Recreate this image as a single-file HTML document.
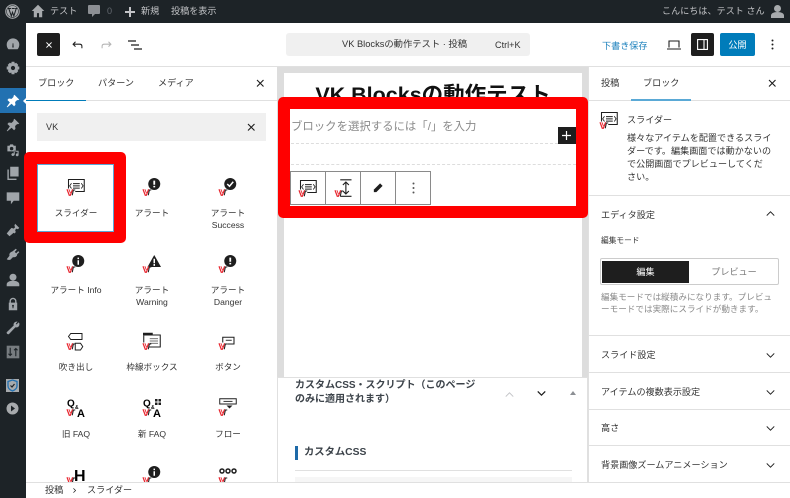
<!DOCTYPE html>
<html lang="ja"><head><meta charset="utf-8"><title>VK Blocks</title>
<style>
html,body{margin:0;padding:0;width:790px;height:498px;overflow:hidden;background:#fff}
body{position:relative;font-family:"Liberation Sans","Noto Sans CJK JP",sans-serif;color:#1e1e1e;font-size:9px;filter:blur(.3px)}
.a{position:absolute}
.t{position:absolute;white-space:nowrap;line-height:12px;font-size:9.100px}
.w{color:#c3c4c7}
.l{position:absolute;background:#e0e0e0}
.c{position:absolute;width:76px;text-align:center;line-height:12px;font-size:8.600px;color:#333}
svg{position:absolute;overflow:visible}
.ic{width:18px;height:18px}
.sb{width:14px;height:14px;fill:#a0a5aa;stroke:none}
.x{stroke:#1e1e1e;stroke-width:1.200;fill:none}
.chev{fill:none;stroke:#1e1e1e;stroke-width:1.200;width:9px;height:5px}
</style></head><body>
<svg width="0" height="0" style="position:absolute">
<defs>
<symbol id="vk" viewBox="0 0 24 24" overflow="visible"><path d="M0 15l3 8h1.500l3-8" fill="none" stroke="#e8262f" stroke-width="1.600"/><path d="M2.500 15l2 5" stroke="#e8262f" stroke-width="1.200"/><path d="M7 23l1.500-7H11" fill="none" stroke="#1e1e1e" stroke-width="1.400"/></symbol>
<symbol id="slider" viewBox="0 0 24 24" overflow="visible"><path d="M2 14V2h21v16H11" fill="none" stroke="#1e1e1e" stroke-width="1.400"/><path d="M8 10.500h9M8 7.500h9M8 13.500h9" stroke="#1e1e1e" stroke-width="1.200"/><path d="M6 7l-2.500 3.500L6 14M19 7l2.500 3.500L19 14" fill="none" stroke="#1e1e1e" stroke-width="1.100"/><use href="#vk"/></symbol>
<symbol id="alert" viewBox="0 0 24 24" overflow="visible"><circle cx="15" cy="8" r="8" fill="#1e1e1e"/><path d="M15 3.500v5.500M15 10.500v2" stroke="#fff" stroke-width="2.400"/><use href="#vk"/></symbol>
<symbol id="succ" viewBox="0 0 24 24" overflow="visible"><circle cx="15" cy="8" r="8" fill="#1e1e1e"/><path d="M11 8l3 3 5-6" fill="none" stroke="#fff" stroke-width="2"/><use href="#vk"/></symbol>
<symbol id="info" viewBox="0 0 24 24" overflow="visible"><circle cx="15" cy="8" r="8" fill="#1e1e1e"/><path d="M15 3.500v2M15 7v6" stroke="#fff" stroke-width="2"/><use href="#vk"/></symbol>
<symbol id="warn" viewBox="0 0 24 24" overflow="visible"><path d="M15 0l9 16H6z" fill="#1e1e1e"/><path d="M15 5v6M15 12v2.500" stroke="#fff" stroke-width="2"/><use href="#vk"/></symbol>
<symbol id="bubble" viewBox="0 0 24 24" overflow="visible"><path d="M5 2h15v8H5L2 6z" fill="none" stroke="#1e1e1e" stroke-width="1.300"/><path d="M11 15h7l3 4.500-3 4.500h-7z" fill="none" stroke="#1e1e1e" stroke-width="1.300"/><use href="#vk"/></symbol>
<symbol id="box" viewBox="0 0 24 24" overflow="visible"><path d="M0 1h13v3h-13z" fill="#1e1e1e"/><path d="M1 4h22v16H8" fill="none" stroke="#1e1e1e" stroke-width="1.400"/><path d="M1 4v10" stroke="#1e1e1e" stroke-width="1.400"/><path d="M9 9h11M9 12h11M9 15h11" stroke="#444" stroke-width="1.100"/><use href="#vk"/></symbol>
<symbol id="btn" viewBox="0 0 24 24" overflow="visible"><path d="M5 14V7h15v9H11" fill="none" stroke="#1e1e1e" stroke-width="1.400"/><path d="M9 11h8" stroke="#1e1e1e" stroke-width="1.200"/><use href="#vk"/></symbol>
<symbol id="flow" viewBox="0 0 24 24" overflow="visible"><path d="M1 1h22v7H1z" fill="none" stroke="#1e1e1e" stroke-width="1.300"/><path d="M6 4.500h12" stroke="#1e1e1e" stroke-width="1.200"/><path d="M10 10h8l-4 4z" fill="#1e1e1e"/><use href="#vk"/></symbol>
<symbol id="vh" viewBox="0 0 24 24" overflow="visible"><use href="#vk"/></symbol>
</defs></svg>

<!-- sidebar + admin bar -->
<div class="a" style="left:0;top:0;width:790px;height:23px;background:#1d2327"></div>
<div class="a" style="left:0;top:0;width:26px;height:498px;background:#1d2327"></div>
<div class="a" style="left:0;top:88px;width:26px;height:25px;background:#2271b1"></div>
<div class="a" style="left:23px;top:97px;width:0;height:0;border:4px solid transparent;border-left:0;border-right:4px solid #fff"></div>

<svg style="left:5px;top:4px" width="15" height="15" viewBox="0 0 20 20"><circle cx="10" cy="10" r="9" fill="none" stroke="#a7aaad" stroke-width="1.500"/><circle cx="10" cy="10" r="7.500" fill="#a7aaad"/><path d="M5 6l3.500 10L10 11l1.800 5L15 6M4 6h4M9 6h4M13.500 6H16" fill="none" stroke="#1d2327" stroke-width="1.400"/></svg>
<svg style="left:31px;top:4px" width="14" height="14" viewBox="0 0 20 20" fill="#a7aaad"><path d="M10 1L1 10h3v9h4.500v-6h3v6H16v-9h3z"/></svg>
<div class="t w" style="left:50px;top:5px">テスト</div>
<svg style="left:88px;top:5px" width="12" height="13" viewBox="0 0 12 13" fill="#8c8f94"><path d="M1 0h10a1 1 0 011 1v7a1 1 0 01-1 1H7l-3 3V9H1a1 1 0 01-1-1V1a1 1 0 011-1z"/></svg>
<div class="t" style="left:107px;top:5px;color:#646970">0</div>
<svg style="left:125px;top:7px" width="10" height="10" viewBox="0 0 10 10"><path d="M5 0v10M0 5h10" stroke="#c3c4c7" stroke-width="2"/></svg>
<div class="t w" style="left:141px;top:5px">新規</div>
<div class="t w" style="left:171px;top:5px">投稿を表示</div>
<div class="t w" style="left:662px;top:5px;font-size:9px;letter-spacing:.1px">こんにちは、テスト さん</div>
<svg style="left:771px;top:5px" width="13" height="13" viewBox="0 0 13 13" fill="#a7aaad"><circle cx="6.500" cy="3.500" r="3.500"/><path d="M0 13v-2.500C0 8.500 2.500 7 6.500 7s6.500 1.500 6.500 3.500V13z"/></svg>

<!-- sidebar icons -->
<svg class="sb" style="left:6px;top:37px" viewBox="0 0 20 20"><path d="M10 2a9 9 0 00-9 9c0 2.500 1 5 2.500 6.500h13C18 16 19 13.500 19 11a9 9 0 00-9-9zm1 13H9l.5-6h1z" fill-rule="evenodd"/></svg>
<svg class="sb" style="left:6px;top:61px" viewBox="0 0 20 20"><path d="M8 1h4l.5 2.500 2-1 3 3-1 2L19 8v4l-2.500.5 1 2-3 3-2-1L12 19H8l-.5-2.500-2 1-3-3 1-2L1 12V8l2.500-.5-1-2 3-3 2 1zm2 6a3 3 0 100 6 3 3 0 000-6z" fill-rule="evenodd"/></svg>
<svg class="sb" style="left:6px;top:94px;fill:#fff" viewBox="0 0 20 20"><path d="M12 1l7 7-2 1-1-.5-3 3 .5 4-2 2-3.500-3.500L2 19l-1-.5 4.500-6.500L2 8.500l2-2 4 .5 3-3-.5-1z"/></svg>
<svg class="sb" style="left:6px;top:118px" viewBox="0 0 20 20"><path d="M12 1l7 7-2 1-1-.5-3 3 .5 4-2 2-3.500-3.500L2 19l-1-.5 4.500-6.500L2 8.500l2-2 4 .5 3-3-.5-1z"/></svg>
<svg class="sb" style="left:6px;top:143px" viewBox="0 0 20 20"><path d="M2 4h3l1-2h4l1 2h3v8H2zm6 1.500a2.500 2.500 0 100 5 2.500 2.500 0 000-5zM11 18a2 2 0 110-3V11h7v6a2 2 0 11-1.500-2v-2.500h-4V16a2 2 0 01-1.500 2z" fill-rule="evenodd"/></svg>
<svg class="sb" style="left:6px;top:166px" viewBox="0 0 20 20"><path d="M6 1h12v14H6zM2 5h2v13h11v2H2z"/></svg>
<svg class="sb" style="left:6px;top:191px" viewBox="0 0 20 20"><path d="M1 2h18v12h-8l-4 5v-5H1z"/></svg>
<svg class="sb" style="left:6px;top:223px" viewBox="0 0 20 20"><path d="M13 1l6 6-2 2-2-1-2 2 1 3-2 2-6-6 2-2 3 1 2-2-1-2zM6 9l5 5-6 5-4-4z"/></svg>
<svg class="sb" style="left:6px;top:248px" viewBox="0 0 20 20"><path d="M14 1l1.500 1.500-3 3 2 2 3-3L19 6l-3 3c0 3-3 5-6 4l-4 4H2v-1l-1 0 4-5c-1-3 1-5 4-6z"/></svg>
<svg class="sb" style="left:6px;top:273px" viewBox="0 0 20 20"><circle cx="10" cy="6" r="5"/><path d="M1 19v-3c0-3 4-5 9-5s9 2 9 5v3z"/></svg>
<svg class="sb" style="left:6px;top:297px" viewBox="0 0 20 20"><path d="M5 8V6a5 5 0 0110 0v2h1v11H4V8zm2 0h6V6a3 3 0 00-6 0zm3 3a1.500 1.500 0 00-.7 2.800V16h1.400v-2.200A1.500 1.500 0 0010 11z" fill-rule="evenodd"/></svg>
<svg class="sb" style="left:6px;top:321px" viewBox="0 0 20 20"><path d="M18 2l-3 3-1-1 2.500-3C13 0 10 3 11 6.500L1 16c-.5 1.500 1 3 3 3l9.500-10C17 10 20 7 19 3z"/></svg>
<svg class="sb" style="left:6px;top:345px;fill:#777c80" viewBox="0 0 20 20"><path d="M1 1h18v18H1z"/><path d="M6 4v11M3.500 12.500L6 15l2.500-2.500M14 16V5M11.500 7.500L14 5l2.500 2.500" fill="none" stroke="#1d2327" stroke-width="1.600"/></svg>
<div class="a" style="left:6px;top:379px;width:13px;height:13px;background:#a7aaad"></div>
<svg style="left:6px;top:379px" width="13" height="13" viewBox="0 0 13 13"><path d="M6.500 1l4.500 1.500V7c0 2.500-2 4-4.500 5C4 11 2 9.500 2 7V2.500z" fill="none" stroke="#2271b1" stroke-width="1.300"/><path d="M4.500 6.500l1.500 1.500 2.500-3" fill="none" stroke="#1d2327" stroke-width="1.200"/></svg>
<svg style="left:6px;top:402px" width="13" height="13" viewBox="0 0 13 13"><circle cx="6.500" cy="6.500" r="6" fill="#a7aaad"/><path d="M5 3.500l4 3-4 3z" fill="#1d2327"/></svg>

<!-- header -->
<div class="l" style="left:26px;top:66px;width:764px;height:1px"></div>
<div class="a" style="left:37px;top:33px;width:23px;height:23px;background:#1e1e1e;border-radius:2px"></div>
<svg style="left:45.500px;top:41.500px" width="6" height="6" viewBox="0 0 7 7"><path d="M.5.500l6 6M6.500.500l-6 6" stroke="#fff" stroke-width="1.200"/></svg>
<svg style="left:72px;top:41px" width="11" height="8" viewBox="0 0 13 10"><path d="M12 9V6.500C12 5 11 4 9 4H1M4 1L1 4l3 3" fill="none" stroke="#1e1e1e" stroke-width="1.300"/></svg>
<svg style="left:101px;top:41px" width="11" height="8" viewBox="0 0 13 10"><path d="M1 9V6.500C1 5 2 4 4 4h8M9 1l3 3-3 3" fill="none" stroke="#b5b5b5" stroke-width="1.300"/></svg>
<svg style="left:128px;top:40px" width="14" height="10" viewBox="0 0 14 10"><path d="M0 1h8M3 5h8M6 9h8" stroke="#1e1e1e" stroke-width="1.200"/></svg>
<div class="a" style="left:286px;top:33px;width:244px;height:23px;background:#f0f0f0;border-radius:3px"></div>
<div class="t" style="left:342px;top:38px;font-size:9.300px;color:#333">VK Blocksの動作テスト · 投稿</div>
<div class="t" style="left:495px;top:39px;color:#333">Ctrl+K</div>
<div class="t" style="left:602px;top:40px;color:#1e82bd">下書き保存</div>
<svg style="left:667px;top:40px" width="14" height="10" viewBox="0 0 14 10"><path d="M2 7.500V1h10v6.500M0 9h14" fill="none" stroke="#1e1e1e" stroke-width="1.100"/></svg>
<div class="a" style="left:691px;top:33px;width:23px;height:23px;background:#1e1e1e;border-radius:2px"></div>
<svg style="left:697px;top:39px" width="11" height="11" viewBox="0 0 11 11"><path d="M.6.600h9.800v9.800H.6zM7 .6v9.800" fill="none" stroke="#fff" stroke-width="1.100"/></svg>
<div class="a" style="left:720px;top:33px;width:35px;height:23px;background:#007cba;border-radius:2px"></div>
<div class="t" style="left:720px;top:39px;width:35px;text-align:center;color:#fff">公開</div>
<svg style="left:771px;top:39px" width="3" height="11" viewBox="0 0 3 11" fill="#1e1e1e"><circle cx="1.500" cy="1.500" r="1"/><circle cx="1.500" cy="5.500" r="1"/><circle cx="1.500" cy="9.500" r="1"/></svg>

<!-- canvas -->
<div class="a" style="left:277px;top:67px;width:312px;height:310px;background:#ddd"></div>
<div class="a" style="left:284px;top:73px;width:298px;height:304px;background:#fff"></div>
<div class="t" style="left:284px;top:82px;width:298px;text-align:center;font-size:21.500px;line-height:26px;font-weight:bold;color:#111">VK Blocksの動作テスト</div>

<!-- meta box -->
<div class="a" style="left:277px;top:377px;width:311px;height:105px;background:#fff;border-left:1px solid #e0e0e0;border-right:1px solid #e0e0e0;box-sizing:border-box;border-top:1px solid #e0e0e0"></div>
<div class="t" style="left:295px;top:380px;font-size:10px;font-weight:bold;color:#3c434a">カスタムCSS・スクリプト（このページ</div>
<div class="t" style="left:295px;top:394px;font-size:10px;font-weight:bold;color:#3c434a">のみに適用されます）</div>
<svg class="chev" style="left:505px;top:392px" viewBox="0 0 10 6"><path d="M.5 5.500L5 1l4.500 4.500" stroke="#c3c4c7"/></svg>
<svg class="chev" style="left:537px;top:391px" viewBox="0 0 10 6"><path d="M.5.500L5 5l4.500-4.500" stroke-width="1.500"/></svg>
<div class="a" style="left:570px;top:391px;width:0;height:0;border:3px solid transparent;border-top:0;border-bottom:4px solid #8c8f94"></div>
<div class="a" style="left:295px;top:446px;width:3px;height:14px;background:#1e6aa8"></div>
<div class="t" style="left:304px;top:447px;font-size:10.300px;font-weight:bold;color:#3c434a">カスタムCSS</div>
<div class="l" style="left:295px;top:470px;width:277px;height:1px"></div>
<div class="a" style="left:295px;top:477px;width:277px;height:5px;background:#f6f6f6"></div>

<!-- inserter -->
<div class="a" style="left:26px;top:67px;width:251px;height:415px;background:#fff;overflow:hidden">
<div class="l" style="left:0;top:33px;width:251px;height:1px"></div>
<div class="a" style="left:0;top:32.500px;width:60px;height:1.500px;background:#007cba"></div>
</div>
<div class="t" style="left:38px;top:77px;color:#333">ブロック</div>
<div class="t" style="left:98px;top:77px;color:#333">パターン</div>
<div class="t" style="left:158px;top:77px;color:#333">メディア</div>
<svg class="x" style="left:257px;top:80px" width="6.500" height="6.500" viewBox="0 0 7 7"><path d="M0 0l7 7M7 0L0 7"/></svg>
<div class="a" style="left:37px;top:113px;width:229px;height:28px;background:#f0f0f0"></div>
<div class="t" style="left:46px;top:121px;color:#333">VK</div>
<svg class="x" style="left:248px;top:124px" width="6.500" height="6.500" viewBox="0 0 7 7"><path d="M0 0l7 7M7 0L0 7"/></svg>

<!-- red 1 -->
<div class="a" style="left:24px;top:152px;width:102px;height:91px;background:#f00;border-radius:5px"></div>
<div class="a" style="left:37px;top:164px;width:77px;height:68px;background:#fff;box-sizing:border-box;border:1px solid #5ba6d6"></div>

<svg class="ic" style="left:67px;top:178px"><use href="#slider" width="18" height="18"/></svg>
<div class="c" style="left:38px;top:207px">スライダー</div>
<svg class="ic" style="left:143px;top:178px"><use href="#alert" width="18" height="18"/></svg>
<div class="c" style="left:114px;top:207px">アラート</div>
<svg class="ic" style="left:219px;top:178px"><use href="#succ" width="18" height="18"/></svg>
<div class="c" style="left:190px;top:207px">アラート<br>Success</div>

<svg class="ic" style="left:67px;top:255px"><use href="#info" width="18" height="18"/></svg>
<div class="c" style="left:38px;top:284px">アラート Info</div>
<svg class="ic" style="left:143px;top:255px"><use href="#warn" width="18" height="18"/></svg>
<div class="c" style="left:114px;top:284px">アラート<br>Warning</div>
<svg class="ic" style="left:219px;top:255px"><use href="#alert" width="18" height="18"/></svg>
<div class="c" style="left:190px;top:284px">アラート<br>Danger</div>

<svg class="ic" style="left:67px;top:332px"><use href="#bubble" width="18" height="18"/></svg>
<div class="c" style="left:38px;top:361px">吹き出し</div>
<svg class="ic" style="left:143px;top:332px"><use href="#box" width="18" height="18"/></svg>
<div class="c" style="left:114px;top:361px">枠線ボックス</div>
<svg class="ic" style="left:219px;top:332px"><use href="#btn" width="18" height="18"/></svg>
<div class="c" style="left:190px;top:361px">ボタン</div>

<svg class="ic" style="left:67px;top:398px"><use href="#vh" width="18" height="18"/><text x="0" y="8.500" font-size="10" font-weight="bold" font-family="Liberation Sans">Q</text><text x="8" y="11" font-size="5" font-weight="bold" font-family="Liberation Sans">&amp;</text><text x="10" y="19" font-size="11" font-weight="bold" font-family="Liberation Sans">A</text></svg>
<div class="c" style="left:38px;top:428px">旧 FAQ</div>
<svg class="ic" style="left:143px;top:398px"><use href="#vh" width="18" height="18"/><text x="0" y="8.500" font-size="10" font-weight="bold" font-family="Liberation Sans">Q</text><text x="8" y="11" font-size="5" font-weight="bold" font-family="Liberation Sans">&amp;</text><text x="10" y="19" font-size="11" font-weight="bold" font-family="Liberation Sans">A</text><path d="M12 1h2.500v2.500H12zM15.500 1H18v2.500h-2.500zM12 4.500h2.500V7H12zM15.500 4.500H18V7h-2.500z" fill="#1e1e1e"/></svg>
<div class="c" style="left:114px;top:428px">新 FAQ</div>
<svg class="ic" style="left:219px;top:398px"><use href="#flow" width="18" height="18"/></svg>
<div class="c" style="left:190px;top:428px">フロー</div>

<svg class="ic" style="left:67px;top:466px"><use href="#vh" width="18" height="18"/><text x="7" y="15" font-size="16" font-weight="bold" font-family="Liberation Sans">H</text></svg>
<svg class="ic" style="left:143px;top:466px"><use href="#info" width="18" height="18"/></svg>
<svg class="ic" style="left:219px;top:466px"><use href="#vh" width="18" height="18"/><circle cx="3" cy="5" r="2" fill="none" stroke="#1e1e1e" stroke-width="1.500"/><circle cx="9" cy="5" r="2" fill="none" stroke="#1e1e1e" stroke-width="1.500"/><circle cx="15" cy="5" r="2" fill="none" stroke="#1e1e1e" stroke-width="1.500"/></svg>

<!-- red 2 -->
<div class="a" style="left:278px;top:97px;width:310px;height:121px;background:#f00;border-radius:5px"></div>
<div class="a" style="left:290px;top:109px;width:286px;height:97px;background:#fff"></div>
<div class="t" style="left:291px;top:120.500px;font-size:11.400px;color:#8a8a8a">ブロックを選択するには「/」を入力</div>
<div class="a" style="left:558px;top:127px;width:18px;height:17px;background:#1e1e1e"></div>
<svg style="left:562px;top:131px" width="9" height="9" viewBox="0 0 9 9"><path d="M4.500 0v9M0 4.500h9" stroke="#fff" stroke-width="1.200"/></svg>
<div class="a" style="left:291px;top:143px;width:267px;border-top:1px dashed #ddd"></div>
<div class="a" style="left:291px;top:164px;width:285px;border-top:1px dashed #ddd"></div>
<div class="a" style="left:290px;top:171px;width:141px;height:34px;box-sizing:border-box;border:1px solid #8a8a8a;background:#fff"></div>
<div class="a" style="left:325px;top:171px;width:1px;height:34px;background:#8a8a8a"></div>
<div class="a" style="left:360px;top:171px;width:1px;height:34px;background:#8a8a8a"></div>
<div class="a" style="left:395px;top:171px;width:1px;height:34px;background:#8a8a8a"></div>
<svg class="ic" style="left:299px;top:179px"><use href="#slider" width="18" height="18"/></svg>
<svg class="ic" style="left:335px;top:179px" viewBox="0 0 24 24"><use href="#vk" width="24" height="24"/><path d="M7 1h15M7 23h15M14.500 4v16M10.500 8l4-4 4 4M10.500 16l4 4 4-4" fill="none" stroke="#1e1e1e" stroke-width="1.500"/></svg>
<svg style="left:373px;top:183px" width="10" height="10" viewBox="0 0 12 12"><path d="M8.500.500l3 3L4 11H1V8z" fill="#1e1e1e"/></svg>
<svg style="left:412px;top:182px" width="3" height="12" viewBox="0 0 3 12" fill="#555"><circle cx="1.500" cy="1.500" r="1"/><circle cx="1.500" cy="6" r="1"/><circle cx="1.500" cy="10.500" r="1"/></svg>

<!-- right sidebar -->
<div class="a" style="left:588px;top:67px;width:202px;height:415px;background:#fff;border-left:1px solid #e0e0e0;box-sizing:border-box"></div>
<div class="t" style="left:601px;top:77px;color:#333">投稿</div>
<div class="t" style="left:643px;top:77px;color:#333">ブロック</div>
<svg class="x" style="left:769px;top:80px" width="6.500" height="6.500" viewBox="0 0 7 7"><path d="M0 0l7 7M7 0L0 7"/></svg>
<div class="l" style="left:589px;top:100px;width:201px;height:1px"></div>
<div class="a" style="left:631px;top:99px;width:60px;height:1.500px;background:#5aa9d6"></div>
<svg class="ic" style="left:600px;top:111px"><use href="#slider" width="18" height="18"/></svg>
<div class="t" style="left:627px;top:114px;color:#333">スライダー</div>
<div class="t" style="left:627px;top:132px;color:#333">様々なアイテムを配置できるスライ</div>
<div class="t" style="left:627px;top:145px;color:#333">ダーです。編集画面では動かないの</div>
<div class="t" style="left:627px;top:158px;color:#333">で公開画面でプレビューしてくだ</div>
<div class="t" style="left:627px;top:171px;color:#333">さい。</div>
<div class="l" style="left:589px;top:195px;width:201px;height:1px"></div>
<div class="t" style="left:601px;top:209px;color:#333">エディタ設定</div>
<svg class="chev" style="left:766px;top:211px" viewBox="0 0 10 6"><path d="M.5 5.500L5 1l4.500 4.500"/></svg>
<div class="t" style="left:601px;top:235px;font-size:7.700px;color:#333">編集モード</div>
<div class="a" style="left:600px;top:258px;width:179px;height:27px;box-sizing:border-box;border:1px solid #ccc;border-radius:2px;background:#fff"></div>
<div class="a" style="left:602px;top:261px;width:87px;height:22px;background:#1e1e1e"></div>
<div class="t" style="left:602px;top:266px;width:87px;text-align:center;color:#fff">編集</div>
<div class="t" style="left:690px;top:266px;width:88px;text-align:center;color:#777">プレビュー</div>
<div class="t" style="left:601px;top:291px;color:#8a8a8a;font-size:8.600px">編集モードでは縦積みになります。プレビュ</div>
<div class="t" style="left:601px;top:303px;color:#8a8a8a;font-size:8.600px">ーモードでは実際にスライドが動きます。</div>
<div class="l" style="left:589px;top:335px;width:201px;height:1px"></div>
<div class="t" style="left:601px;top:349px;color:#333">スライド設定</div>
<svg class="chev" style="left:766px;top:353px" viewBox="0 0 10 6"><path d="M.5.500L5 5l4.500-4.500"/></svg>
<div class="l" style="left:589px;top:372px;width:201px;height:1px"></div>
<div class="t" style="left:601px;top:386px;color:#333">アイテムの複数表示設定</div>
<svg class="chev" style="left:766px;top:390px" viewBox="0 0 10 6"><path d="M.5.500L5 5l4.500-4.500"/></svg>
<div class="l" style="left:589px;top:409px;width:201px;height:1px"></div>
<div class="t" style="left:601px;top:422px;color:#333">高さ</div>
<svg class="chev" style="left:766px;top:426px" viewBox="0 0 10 6"><path d="M.5.500L5 5l4.500-4.500"/></svg>
<div class="l" style="left:589px;top:445px;width:201px;height:1px"></div>
<div class="t" style="left:601px;top:459px;color:#333">背景画像ズームアニメーション</div>
<svg class="chev" style="left:766px;top:463px" viewBox="0 0 10 6"><path d="M.5.500L5 5l4.500-4.500"/></svg>

<!-- breadcrumb -->
<div class="a" style="left:26px;top:482px;width:764px;height:16px;background:#fff;border-top:1px solid #e0e0e0;box-sizing:border-box"></div>
<div class="t" style="left:45px;top:484px;color:#333">投稿</div>
<svg style="left:73px;top:488px" width="3" height="5" viewBox="0 0 4 7"><path d="M.5.500l3 3-3 3" fill="none" stroke="#1e1e1e"/></svg>
<div class="t" style="left:87px;top:484px;color:#333">スライダー</div>
</body></html>
